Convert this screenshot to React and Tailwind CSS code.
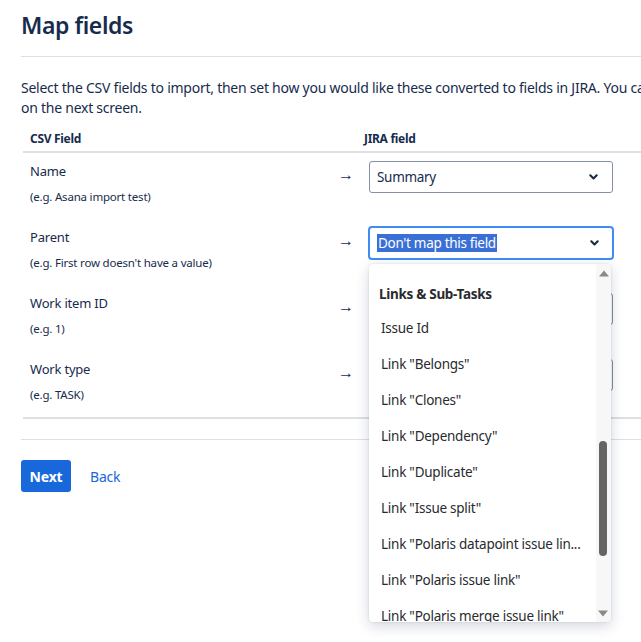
import React from "react";

const rows = [
  { name: "Name", ex: "(e.g. Asana import test)", value: "Summary" },
  { name: "Parent", ex: "(e.g. First row doesn't have a value)", value: "Don't map this field", open: true },
  { name: "Work item ID", ex: "(e.g. 1)", value: "Don't map this field" },
  { name: "Work type", ex: "(e.g. TASK)", value: "Don't map this field" },
];

const items = [
  "Issue Id",
  'Link "Belongs"',
  'Link "Clones"',
  'Link "Dependency"',
  'Link "Duplicate"',
  'Link "Issue split"',
  'Link "Polaris datapoint issue lin...',
  'Link "Polaris issue link"',
  'Link "Polaris merge issue link"',
];

function Chevron() {
  return (
    <svg width="9" height="6" viewBox="0 0 9 6" className="shrink-0">
      <path d="M1.3 1.3 L4.5 4.5 L7.7 1.3" fill="none" stroke="#1d2a44" strokeWidth="2.1" strokeLinecap="round" strokeLinejoin="round" />
    </svg>
  );
}

function Select({ value, open }) {
  if (open) {
    return (
      <div className="relative w-[246px] h-[34px] -mt-[1px] -ml-[1px] rounded-[4px] border-2 border-[#3f8cf7] flex items-center pl-[7px] pr-[13px] justify-between bg-white">
        <span className="bg-[#3a6fd6] text-white leading-[18px] h-[18px] px-[1px] text-[13.5px] tracking-[-0.3px]">{value}</span>
        <Chevron />
      </div>
    );
  }
  return (
    <div className="w-[244px] h-[32px] rounded-[3px] border border-[#8590a2] flex items-center pl-[7px] pr-[14px] justify-between bg-white">
      <span className="text-[13.5px] tracking-[-0.3px] text-[#172b4d]">{value}</span>
      <Chevron />
    </div>
  );
}

function Dropdown() {
  return (
    <div className="absolute left-[0px] top-[45px] w-[242px] h-[358px] bg-white rounded-[4px] shadow-[0_4px_14px_rgba(9,30,66,0.18),0_0_2px_rgba(9,30,66,0.15)] overflow-hidden z-10 flex">
      <div className="flex-1 overflow-hidden pt-[19px]">
        <div className="pl-[10px] h-[22px] leading-[22px] font-bold text-[13.5px] tracking-[-0.3px] text-[#292a2e]">Links &amp; Sub-Tasks</div>
        <div className="mt-[5px] flex flex-col">
          {items.map((t) => (
            <div key={t} className="pl-[12px] h-[36px] leading-[36px] text-[13.5px] tracking-[-0.25px] text-[#292a2e] whitespace-nowrap">
              {t}
            </div>
          ))}
        </div>
      </div>
      <div className="w-[15px] bg-[#f7f7f7] relative flex flex-col items-center">
        <svg width="10" height="7" viewBox="0 0 10 7" className="mt-[6px]">
          <path d="M0 6.5 L5 0.5 L10 6.5 Z" fill="#8a8a8a" />
        </svg>
        <div className="absolute left-[3px] top-[177px] w-[8px] h-[115px] rounded-full bg-[#646464]" />
        <svg width="10" height="7" viewBox="0 0 10 7" className="absolute bottom-[5px] left-[2px]">
          <path d="M0 0.5 L5 6.5 L10 0.5 Z" fill="#8a8a8a" />
        </svg>
      </div>
    </div>
  );
}

export default function App() {
  return (
    <div
      className="w-[641px] h-[642px] overflow-hidden bg-white text-[#172b4d]"
      style={{ fontFamily: '"Noto Sans", "Open Sans", sans-serif' }}
    >
      <div className="w-[900px] pl-[21px]">
        <h1 className="pt-[10px] text-[23px] leading-[30px] font-semibold tracking-[-0.4px] text-[#172b4d]">Map fields</h1>
        <div className="mt-[16px] h-[1px] bg-[#dcdfe4]" />
        <p className="mt-[21px] text-[14px] leading-[20px] tracking-[-0.25px] text-[#172b4d]">
          <span className="whitespace-nowrap">
            Select the CSV fields to import, then set how you would like these converted to fields in JIRA. You can choose to map field values
          </span>
          <br />
          on the next screen.
        </p>
        <div className="ml-[2px] mt-[11px]">
          <div className="flex h-[24px] items-center border-b-2 border-[#dcdfe4] pb-[2px]">
            <div className="w-[333px] pl-[7px] text-[12px] font-bold tracking-[-0.3px]">CSV Field</div>
            <div className="w-[335px] pl-[8px] text-[12px] font-bold tracking-[-0.3px]">JIRA field</div>
          </div>
          {rows.map((r) => (
            <div key={r.name} className="flex h-[66px]">
              <div className="w-[307px] pl-[7px] pt-[8px]">
                <div className="text-[13px] leading-[20px] tracking-[-0.2px]">{r.name}</div>
                <div className="mt-[8px] text-[11.5px] leading-[16px] tracking-[-0.2px]">{r.ex}</div>
              </div>
              <div className="w-[39px] pt-[10px] pl-[8px] text-[16px] leading-[22px]">→</div>
              <div className="pt-[8px] relative">
                <Select value={r.value} open={r.open} />
                {r.open && <Dropdown />}
              </div>
            </div>
          ))}
          <div className="h-[2px] bg-[#dcdfe4]" />
        </div>
        <div className="mt-[20px] h-[1px] bg-[#dcdfe4]" />
        <div className="mt-[20px] flex items-center gap-[19px]">
          <button className="h-[32px] w-[50px] rounded-[3px] bg-[#1868db] text-white font-bold text-[14px] tracking-[-0.2px]">Next</button>
          <span className="text-[14px] tracking-[-0.2px] text-[#1868db]">Back</span>
        </div>
      </div>
    </div>
  );
}
